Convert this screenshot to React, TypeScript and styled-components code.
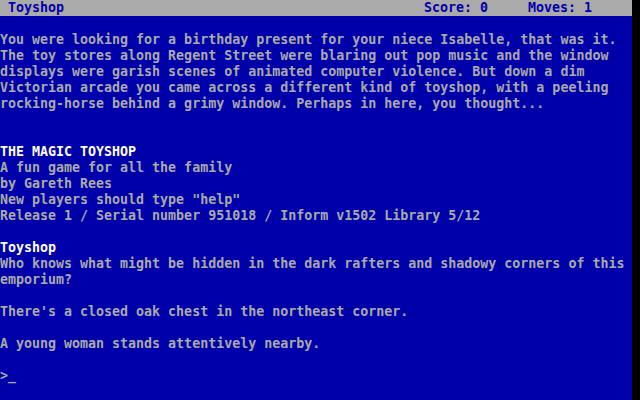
import React from "react";
import styled, { createGlobalStyle } from "styled-components";

const Global = createGlobalStyle`
  html, body { margin: 0; padding: 0; background: #000; }
  body { width: 640px; height: 400px; overflow: hidden; }
`;

const Screen = styled.div`
  width: 632px;
  height: 400px;
  background: #0000aa;
  font-family: "DejaVu Sans Mono", "Liberation Mono", monospace;
  font-weight: bold;
  font-size: 13.3px;
  line-height: 16px;
  color: #aaaaaa;
  display: flex;
  flex-direction: column;
`;

const StatusBar = styled.div`
  height: 16px;
  background: #aaaaaa;
  color: #0000aa;
  display: flex;
  white-space: pre;
`;

const Cell = styled.span<{ $cols: number }>`
  width: ${(p) => p.$cols * 8}px;
  flex: none;
  overflow: hidden;
`;

const Body = styled.div`
  padding-top: 16px;
  display: flex;
  flex-direction: column;
`;

const Line = styled.div<{ $bright?: boolean }>`
  height: 16px;
  white-space: pre;
  color: ${(p) => (p.$bright ? "#ffffff" : "#aaaaaa")};
`;

const Cursor = styled.span`
  color: #aaaaaa;
`;

const lines: { t: string; b?: boolean }[] = [
  { t: "You were looking for a birthday present for your niece Isabelle, that was it." },
  { t: "The toy stores along Regent Street were blaring out pop music and the window" },
  { t: "displays were garish scenes of animated computer violence. But down a dim" },
  { t: "Victorian arcade you came across a different kind of toyshop, with a peeling" },
  { t: "rocking-horse behind a grimy window. Perhaps in here, you thought..." },
  { t: "" },
  { t: "" },
  { t: "THE MAGIC TOYSHOP", b: true },
  { t: "A fun game for all the family" },
  { t: "by Gareth Rees" },
  { t: 'New players should type "help"' },
  { t: "Release 1 / Serial number 951018 / Inform v1502 Library 5/12" },
  { t: "" },
  { t: "Toyshop", b: true },
  { t: "Who knows what might be hidden in the dark rafters and shadowy corners of this" },
  { t: "emporium?" },
  { t: "" },
  { t: "There's a closed oak chest in the northeast corner." },
  { t: "" },
  { t: "A young woman stands attentively nearby." },
  { t: "" },
];

export default function App() {
  return (
    <>
      <Global />
      <Screen>
        <StatusBar>
          <Cell $cols={53}>{" Toyshop"}</Cell>
          <Cell $cols={13}>Score: 0</Cell>
          <Cell $cols={13}>Moves: 1</Cell>
        </StatusBar>
        <Body>
          {lines.map((l, i) => (
            <Line key={i} $bright={l.b}>
              {l.t}
            </Line>
          ))}
          <Line>
            {">"}
            <Cursor>_</Cursor>
          </Line>
        </Body>
      </Screen>
    </>
  );
}
